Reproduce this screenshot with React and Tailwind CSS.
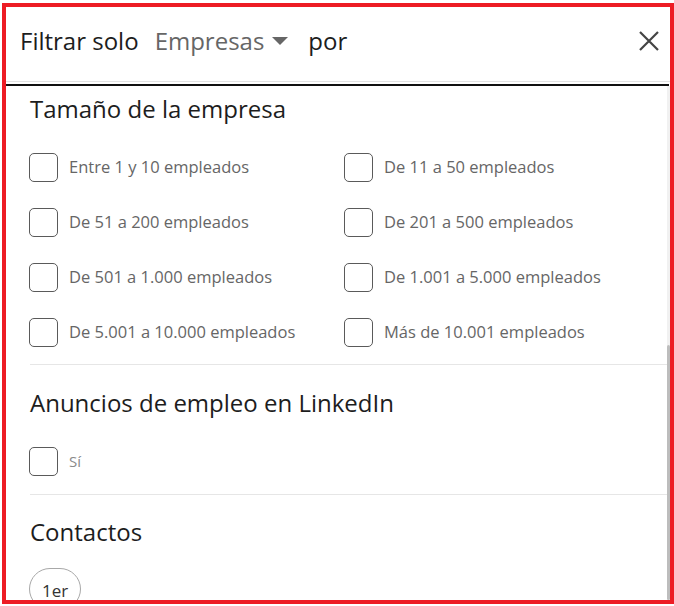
import React from 'react';

const sizes = [
    ['Entre 1 y 10 empleados', 'De 11 a 50 empleados'],
    ['De 51 a 200 empleados', 'De 201 a 500 empleados'],
    ['De 501 a 1.000 empleados', 'De 1.001 a 5.000 empleados'],
    ['De 5.001 a 10.000 empleados', 'Más de 10.001 empleados'],
];

const Check = ({ label, small }) => (
    <label className="flex items-center gap-[11px] h-[55px] cursor-pointer">
        <span className="w-[29px] h-[29px] rounded-[5px] border-[1.5px] border-[#5a5a5a] shrink-0" />
        <span className={small ? 'text-[15px] text-[#8a8a8a]' : 'text-[16.5px] text-[#666]'}>{label}</span>
    </label>
);

const Heading = ({ children }) => (
    <h2 className="text-[24px] leading-[28px] text-[#1d1d1d]">{children}</h2>
);

const App = () => {
    return (
        <div className="w-[674px] h-[606px] bg-white pt-[3px] pl-[2px] pb-[2px] font-['Open_Sans',sans-serif]">
            <div className="h-full border-4 border-[#ed1c24] flex flex-col overflow-hidden">
                {/* Header */}
                <div className="h-[75px] shrink-0 flex items-center justify-between pl-[14px] pr-[10px] pb-[6px] border-b border-[#e2e2e2]">
                    <div className="flex items-center text-[24px] text-[#1d1d1d]">
                        <span>Filtrar solo</span>
                        <button className="flex items-center ml-[16px] text-[#666]">
                            Empresas
                            <svg width="16" height="8" viewBox="0 0 16 8" className="ml-[8px]">
                                <path d="M0 0h16L8 8z" fill="#666" />
                            </svg>
                        </button>
                        <span className="ml-[20px]">por</span>
                    </div>
                    <button className="w-[22px] h-[22px] flex items-center justify-center">
                        <svg width="22" height="22" viewBox="0 0 22 22" fill="none" stroke="#444" strokeWidth="2.2">
                            <path d="M2 2l18 18M20 2L2 20" />
                        </svg>
                    </button>
                </div>
                <div className="mt-[2px] h-[2px] bg-[#111] mr-[1px] shrink-0" />

                <div className="flex-1 flex min-h-0 relative">
                    <div className="flex-1 pl-[24px] pt-[9px]">
                        <section>
                            <Heading>Tamaño de la empresa</Heading>
                            <div className="grid grid-cols-[315px_1fr] mt-[17px] -ml-px">
                                {sizes.map(([a, b]) => (
                                    <React.Fragment key={a}>
                                        <Check label={a} />
                                        <Check label={b} />
                                    </React.Fragment>
                                ))}
                            </div>
                            <div className="mt-[4px] border-t border-[#e6e6e6]" />
                        </section>

                        <section className="pt-[24px]">
                            <Heading>Anuncios de empleo en LinkedIn</Heading>
                            <div className="mt-[17px] -ml-px">
                                <Check label="Sí" small />
                            </div>
                            <div className="mt-[5px] border-t border-[#e6e6e6]" />
                        </section>

                        <section className="pt-[23px]">
                            <Heading>Contactos</Heading>
                            <div className="mt-[22px] -ml-px">
                                <button className="h-[42px] px-[12px] pt-[4px] rounded-full border border-[#a8a8a8] text-[17px] text-[#333]">
                                    1er
                                </button>
                            </div>
                        </section>
                    </div>
                    <div className="w-[3px] bg-[#f1f1f1] flex flex-col">
                        <div className="h-[259px]" />
                        <div className="flex-1 bg-[#bdbdbd] rounded-full" />
                    </div>
                </div>
            </div>
        </div>
    );
};

export default App;
